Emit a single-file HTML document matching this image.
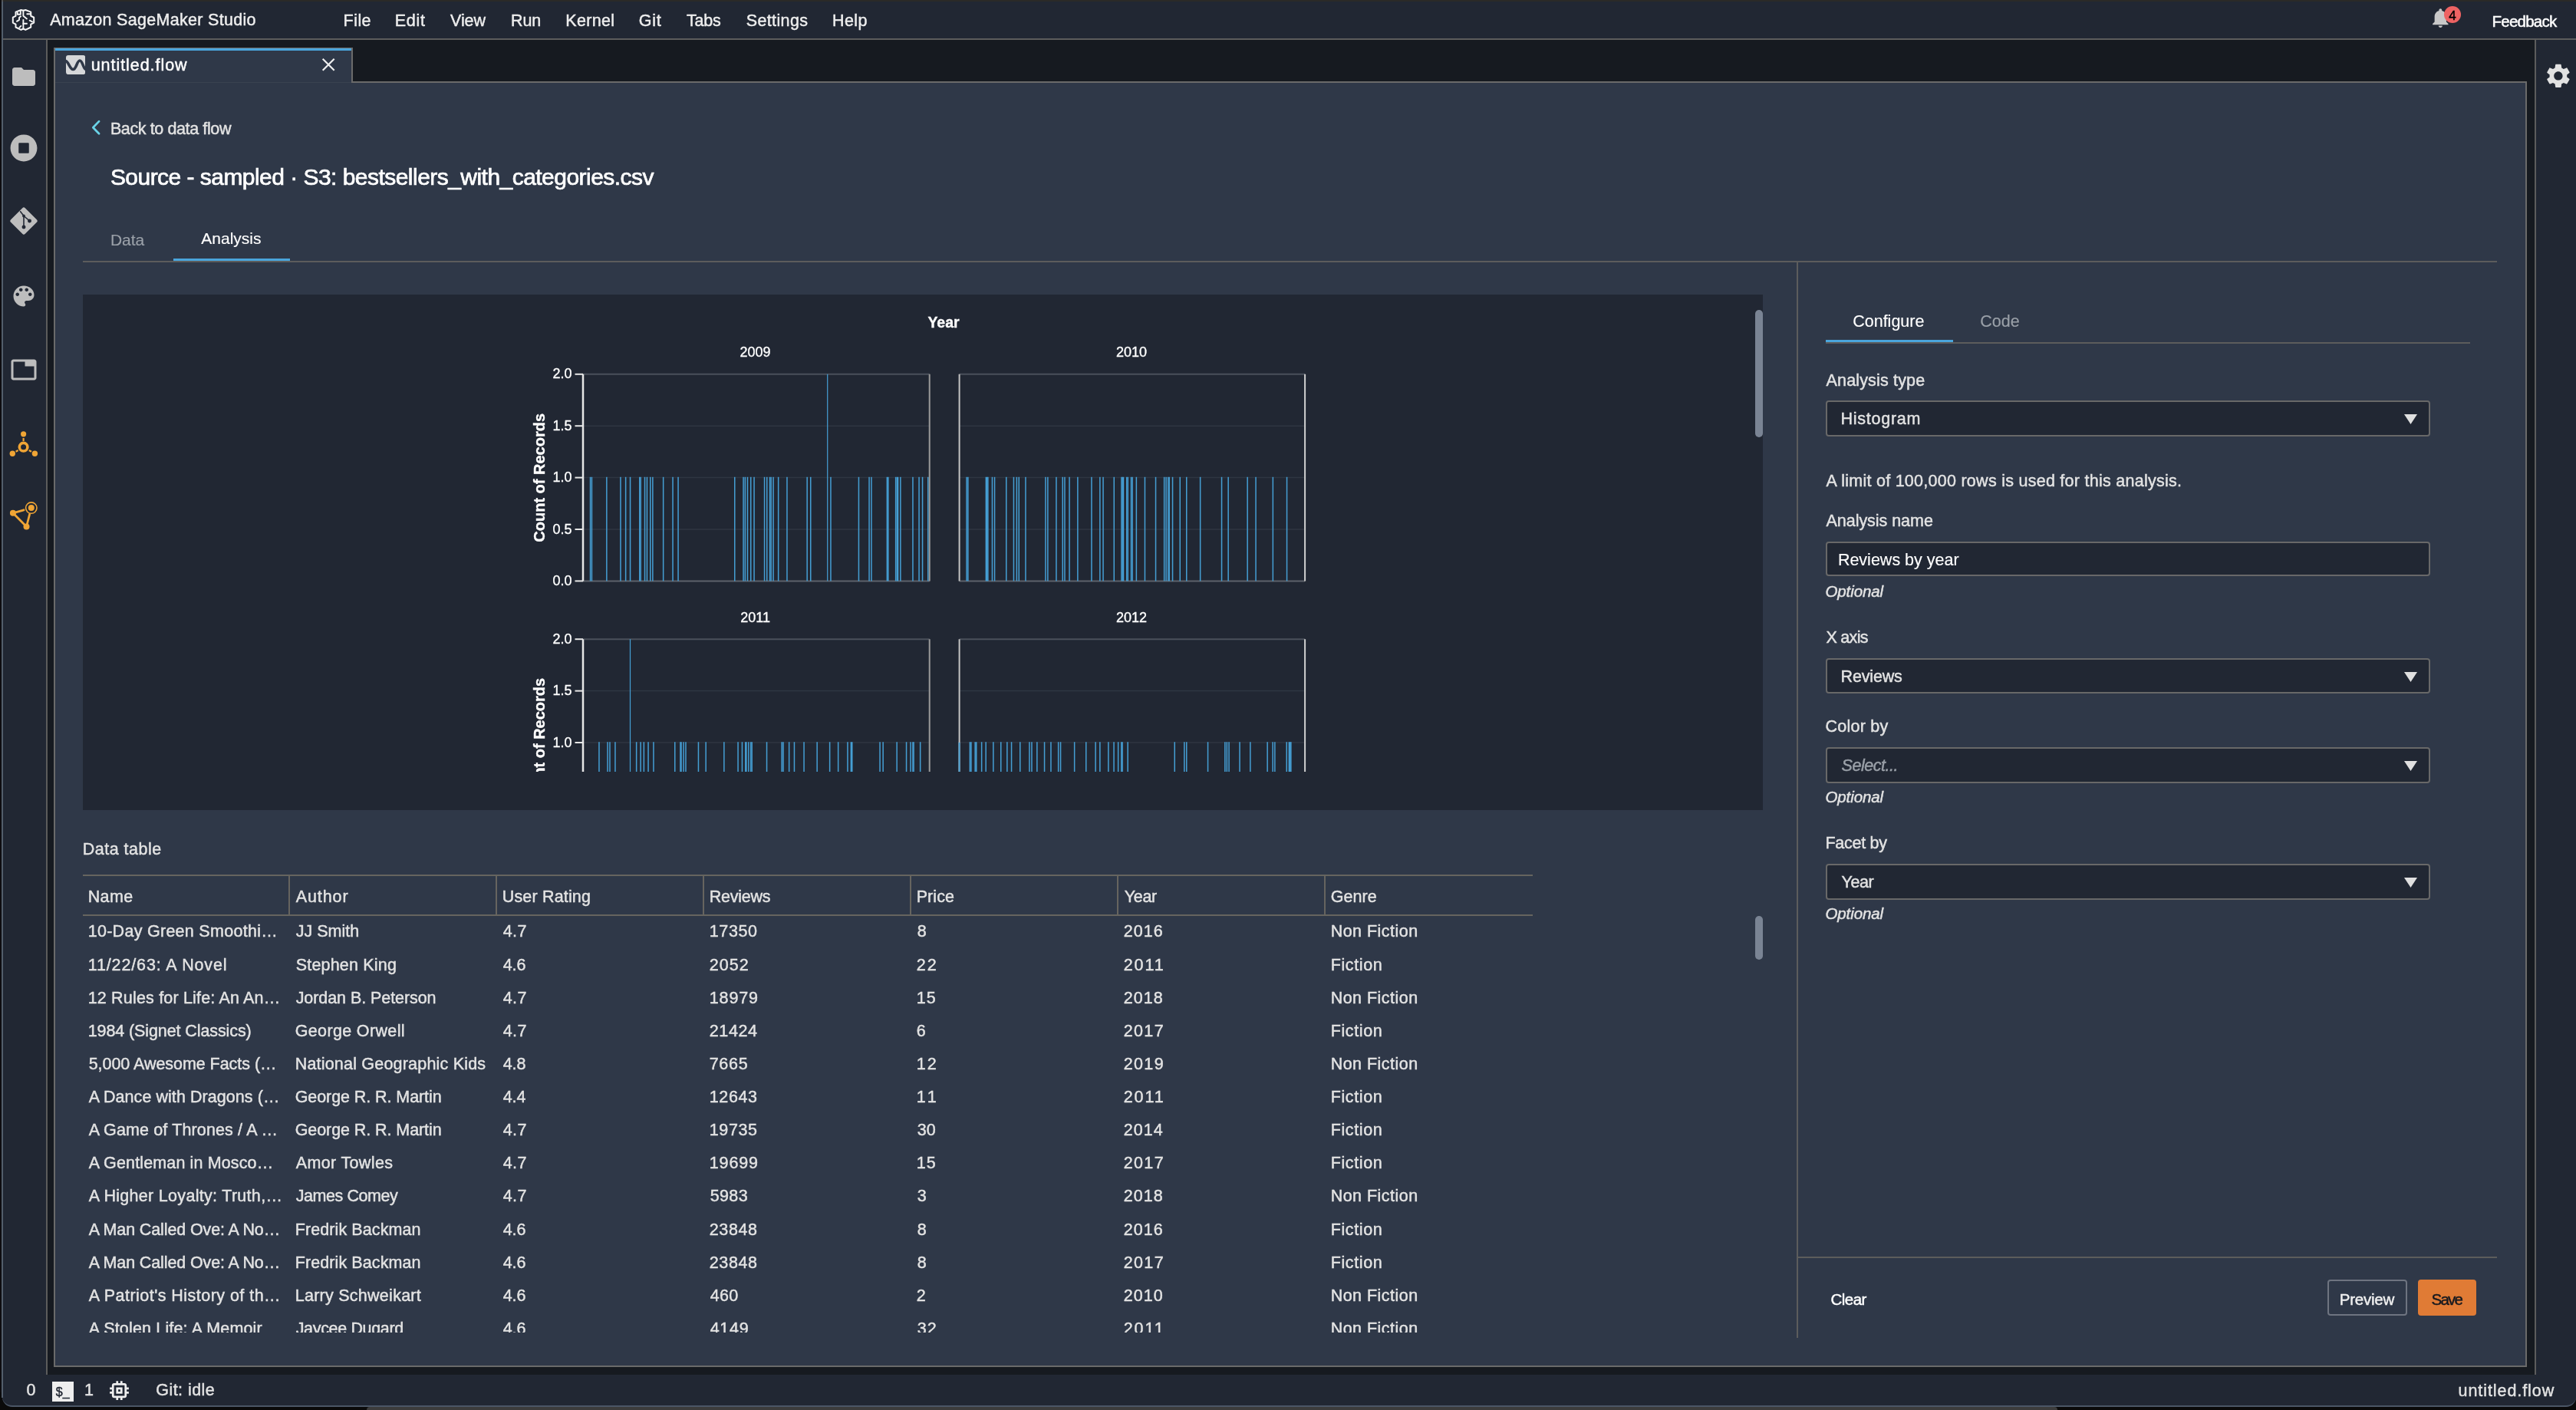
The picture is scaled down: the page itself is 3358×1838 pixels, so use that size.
<!DOCTYPE html>
<html lang="en"><head><meta charset="utf-8"><title>Amazon SageMaker Studio</title>
<style>
html,body{margin:0;padding:0;}
body{width:3358px;height:1838px;overflow:hidden;background:#161a20;position:relative;font-family:"Liberation Sans", sans-serif;}
.a{position:absolute;box-sizing:border-box;}
.t{position:absolute;white-space:pre;line-height:1;font-family:"Liberation Sans", sans-serif;-webkit-text-stroke:0.45px;}
svg{position:absolute;overflow:hidden;font-family:"Liberation Sans",sans-serif;}
#root{position:absolute;left:0;top:0;width:3358px;height:1838px;will-change:transform;}
</style></head><body><div id="root">
<div class="a" style="left:0px;top:0px;width:3358px;height:2px;background:#2a2a28;"></div>
<div class="a" style="left:0px;top:0px;width:2px;height:1838px;background:#0e0d10;"></div>
<div class="a" style="left:2px;top:0px;width:2px;height:2px;background:#555555;"></div>
<div class="a" style="left:3px;top:2px;width:3355px;height:49px;background:#212733;"></div>
<div class="a" style="left:3px;top:50px;width:3355px;height:2px;background:#5c5c5c;"></div>
<div class="a" style="left:3px;top:52px;width:57px;height:1740px;background:#212733;"></div>
<div class="a" style="left:60px;top:52px;width:2px;height:1740px;background:#5c5c5c;"></div>
<div class="a" style="left:3306px;top:52px;width:52px;height:1740px;background:#212733;"></div>
<div class="a" style="left:3304px;top:52px;width:2px;height:1740px;background:#5c5c5c;"></div>
<div class="a" style="left:0px;top:1815px;width:3358px;height:23px;background:#0a0a0a;"></div>
<div class="a" style="left:3px;top:1792px;width:3355px;height:42px;background:#212733;border-bottom-left-radius:13px;border-bottom-right-radius:13px;border-bottom:2px solid #4b5666;"></div>
<div class="a" style="left:0px;top:1834px;width:3358px;height:4px;background:#0a0a0a;"></div>
<div class="a" style="left:478px;top:1834px;width:2204px;height:4px;background:#3c3c3c;border-top-left-radius:6px;border-top-right-radius:6px;"></div>
<div class="a" style="left:70px;top:106px;width:3224px;height:1676px;background:#2f3848;border:2px solid #6a6a6a;"></div>
<div class="a" style="left:70px;top:62px;width:390px;height:46px;background:#2f3848;border-left:2px solid #6a6a6a;border-right:2px solid #6a6a6a;border-top:1px solid #6a6a6a;"></div>
<div class="a" style="left:72px;top:63px;width:386px;height:3px;background:#4aa5dc;"></div>
<div class="a" style="left:72px;top:107px;width:386px;height:1px;background:#3a4250;"></div>
<div class="t" style="font-size:21.5px;color:#eeeeee;letter-spacing:0.297px;left:65.2px;top:16.3px;">Amazon SageMaker Studio</div>
<div class="t" style="font-size:21.5px;color:#eeeeee;letter-spacing:0.438px;left:447.6px;top:16.8px;">File</div>
<div class="t" style="font-size:21.5px;color:#eeeeee;letter-spacing:0.709px;left:514.7px;top:16.8px;">Edit</div>
<div class="t" style="font-size:21.5px;color:#eeeeee;letter-spacing:-0.062px;left:587.0px;top:16.8px;">View</div>
<div class="t" style="font-size:21.5px;color:#eeeeee;letter-spacing:-0.092px;left:666px;top:16.8px;">Run</div>
<div class="t" style="font-size:21.5px;color:#eeeeee;letter-spacing:0.326px;left:737.3px;top:16.8px;">Kernel</div>
<div class="t" style="font-size:21.5px;color:#eeeeee;letter-spacing:0.75px;left:832.8px;top:16.8px;">Git</div>
<div class="t" style="font-size:21.5px;color:#eeeeee;letter-spacing:-0.155px;left:894.9px;top:16.8px;">Tabs</div>
<div class="t" style="font-size:21.5px;color:#eeeeee;letter-spacing:0.381px;left:972.7px;top:16.8px;">Settings</div>
<div class="t" style="font-size:21.5px;color:#eeeeee;letter-spacing:0.48px;left:1084.9px;top:16.8px;">Help</div>
<div class="t" style="font-size:20.5px;color:#ffffff;letter-spacing:-0.768px;left:3248.5px;top:17.65px;">Feedback</div>
<div class="t" style="font-size:21.5px;color:#ffffff;letter-spacing:0.949px;left:118.7px;top:74.8px;">untitled.flow</div>
<div class="t" style="font-size:21.5px;color:#e3e3e3;letter-spacing:-0.388px;left:143.9px;top:157.5px;">Back to data flow</div>
<div class="t" style="font-size:30px;color:#ffffff;letter-spacing:-0.536px;left:143.9px;top:215.6px;-webkit-text-stroke:0.7px;">Source - sampled · S3: bestsellers_with_categories.csv</div>
<div class="t" style="font-size:21px;color:#9aa0a8;left:143.9px;top:301.72px;-webkit-text-stroke:0.15px;">Data</div>
<div class="t" style="font-size:21px;color:#ffffff;left:262.3px;top:300.42px;-webkit-text-stroke:0.15px;">Analysis</div>
<div class="a" style="left:108px;top:340px;width:3147px;height:2px;background:#5c5c5c;"></div>
<div class="a" style="left:226px;top:337px;width:152px;height:3px;background:#4aa5dc;"></div>
<div class="a" style="left:2342px;top:341px;width:2px;height:1403px;background:#5c5c5c;"></div>
<div class="t" style="font-size:21.5px;color:#ffffff;left:2415.2px;top:409.0px;-webkit-text-stroke:0.15px;">Configure</div>
<div class="t" style="font-size:21.5px;color:#9aa0a8;left:2581.2px;top:409.0px;-webkit-text-stroke:0.15px;">Code</div>
<div class="a" style="left:2380px;top:446px;width:840px;height:2px;background:#5c5c5c;"></div>
<div class="a" style="left:2380px;top:443px;width:166px;height:3px;background:#4aa5dc;"></div>
<div class="t" style="font-size:21.5px;color:#e3e3e3;letter-spacing:0.166px;left:2380.5px;top:485.8px;">Analysis type</div>
<div class="a" style="left:2380px;top:522px;width:788px;height:47px;background:#212733;border:2px solid #686868;border-radius:4px;"></div>
<div class="t" style="font-size:21.5px;color:#e3e3e3;letter-spacing:0.73px;left:2399.6px;top:536.1px;">Histogram</div>
<svg style="left:3134px;top:540px" width="17" height="13" viewBox="0 0 17 13"><path d="M0 0H17L8.5 13Z" fill="#e0e0e0"/></svg>
<div class="t" style="font-size:21.5px;color:#e3e3e3;letter-spacing:0.265px;left:2380.5px;top:616.5px;">A limit of 100,000 rows is used for this analysis.</div>
<div class="t" style="font-size:21.5px;color:#e3e3e3;letter-spacing:-0.038px;left:2380.5px;top:668.6px;">Analysis name</div>
<div class="a" style="left:2380px;top:706px;width:788px;height:45px;background:#212733;border:2px solid #686868;border-radius:4px;"></div>
<div class="t" style="font-size:21.5px;color:#ffffff;left:2395.9px;top:720.4px;-webkit-text-stroke:0.15px;">Reviews by year</div>
<div class="t" style="font-size:20.5px;color:#e3e3e3;letter-spacing:-0.114px;font-style:italic;left:2379.5px;top:761.05px;">Optional</div>
<div class="t" style="font-size:21.5px;color:#e3e3e3;letter-spacing:-0.72px;left:2380.5px;top:820.6px;">X axis</div>
<div class="a" style="left:2380px;top:858px;width:788px;height:46px;background:#212733;border:2px solid #686868;border-radius:4px;"></div>
<div class="t" style="font-size:21.5px;color:#e3e3e3;letter-spacing:-0.166px;left:2399.6px;top:872.1px;">Reviews</div>
<svg style="left:3134px;top:876px" width="17" height="13" viewBox="0 0 17 13"><path d="M0 0H17L8.5 13Z" fill="#e0e0e0"/></svg>
<div class="t" style="font-size:21.5px;color:#e3e3e3;letter-spacing:0.227px;left:2379.5px;top:936.7px;">Color by</div>
<div class="a" style="left:2380px;top:974px;width:788px;height:47px;background:#212733;border:2px solid #686868;border-radius:4px;"></div>
<div class="t" style="font-size:21.5px;color:#9aa0a8;letter-spacing:-0.475px;font-style:italic;left:2400.6px;top:988.1px;">Select...</div>
<svg style="left:3134px;top:992px" width="17" height="13" viewBox="0 0 17 13"><path d="M0 0H17L8.5 13Z" fill="#e0e0e0"/></svg>
<div class="t" style="font-size:20.5px;color:#e3e3e3;letter-spacing:-0.114px;font-style:italic;left:2379.5px;top:1029.15px;">Optional</div>
<div class="t" style="font-size:21.5px;color:#e3e3e3;letter-spacing:-0.286px;left:2379.5px;top:1088.7px;">Facet by</div>
<div class="a" style="left:2380px;top:1126px;width:788px;height:47px;background:#212733;border:2px solid #686868;border-radius:4px;"></div>
<div class="t" style="font-size:21.5px;color:#e3e3e3;letter-spacing:-0.46px;left:2400.6px;top:1140.1px;">Year</div>
<svg style="left:3134px;top:1144px" width="17" height="13" viewBox="0 0 17 13"><path d="M0 0H17L8.5 13Z" fill="#e0e0e0"/></svg>
<div class="t" style="font-size:20.5px;color:#e3e3e3;letter-spacing:-0.114px;font-style:italic;left:2379.5px;top:1181.15px;">Optional</div>
<div class="a" style="left:2343px;top:1638px;width:912px;height:2px;background:#5c5c5c;"></div>
<div class="t" style="font-size:20.5px;color:#ffffff;letter-spacing:-0.54px;left:2386.5px;top:1683.65px;">Clear</div>
<div class="a" style="left:3034px;top:1668px;width:104px;height:47px;border:2px solid #6e7480;border-radius:4px;"></div>
<div class="t" style="font-size:20.5px;color:#f0f0f0;letter-spacing:-0.251px;left:3049.8px;top:1683.65px;">Preview</div>
<div class="a" style="left:3152px;top:1668px;width:76px;height:47px;background:#e07b35;border-radius:4px;"></div>
<div class="t" style="font-size:20.5px;color:#16191f;letter-spacing:-1.775px;left:3169.5px;top:1683.65px;">Save</div>
<div class="t" style="font-size:21.5px;color:#e3e3e3;left:34.5px;top:1802.4px;">0</div>
<div class="t" style="font-size:21.5px;color:#e3e3e3;left:110px;top:1802.4px;">1</div>
<div class="t" style="font-size:21.5px;color:#e3e3e3;letter-spacing:0.446px;left:203.3px;top:1802.4px;">Git: idle</div>
<div class="t" style="font-size:21.5px;color:#e3e3e3;letter-spacing:0.924px;left:3204.6px;top:1802.7px;">untitled.flow</div>
<div class="a" style="left:108px;top:384px;width:2190px;height:672px;background:#212733;"></div>
<div class="a" style="left:2288px;top:404px;width:10px;height:166px;background:#7a8494;border-radius:5px;"></div>
<svg style="left:108px;top:384px" width="2190" height="622" viewBox="108 384 2190 622" stroke-width="0.35">
<line x1="760" x2="1211.7" y1="555.2" y2="555.2" stroke="#2f3642" stroke-width="1.5"/>
<line x1="760" x2="1211.7" y1="622.6" y2="622.6" stroke="#2f3642" stroke-width="1.5"/>
<line x1="760" x2="1211.7" y1="690.0" y2="690.0" stroke="#2f3642" stroke-width="1.5"/>
<line x1="760" x2="1211.7" y1="487.8" y2="487.8" stroke="#4a505b" stroke-width="2"/>
<line x1="760" x2="1211.7" y1="757.4000000000001" y2="757.4000000000001" stroke="#5d626b" stroke-width="2"/>
<line x1="1250.6" x2="1701.1" y1="555.2" y2="555.2" stroke="#2f3642" stroke-width="1.5"/>
<line x1="1250.6" x2="1701.1" y1="622.6" y2="622.6" stroke="#2f3642" stroke-width="1.5"/>
<line x1="1250.6" x2="1701.1" y1="690.0" y2="690.0" stroke="#2f3642" stroke-width="1.5"/>
<line x1="1250.6" x2="1701.1" y1="487.8" y2="487.8" stroke="#4a505b" stroke-width="2"/>
<line x1="1250.6" x2="1701.1" y1="757.4000000000001" y2="757.4000000000001" stroke="#5d626b" stroke-width="2"/>
<line x1="760" x2="1211.7" y1="900.6" y2="900.6" stroke="#2f3642" stroke-width="1.5"/>
<line x1="760" x2="1211.7" y1="968.0" y2="968.0" stroke="#2f3642" stroke-width="1.5"/>
<line x1="760" x2="1211.7" y1="1035.4" y2="1035.4" stroke="#2f3642" stroke-width="1.5"/>
<line x1="760" x2="1211.7" y1="833.2" y2="833.2" stroke="#4a505b" stroke-width="2"/>
<line x1="760" x2="1211.7" y1="1102.8000000000002" y2="1102.8000000000002" stroke="#5d626b" stroke-width="2"/>
<line x1="1250.6" x2="1701.1" y1="900.6" y2="900.6" stroke="#2f3642" stroke-width="1.5"/>
<line x1="1250.6" x2="1701.1" y1="968.0" y2="968.0" stroke="#2f3642" stroke-width="1.5"/>
<line x1="1250.6" x2="1701.1" y1="1035.4" y2="1035.4" stroke="#2f3642" stroke-width="1.5"/>
<line x1="1250.6" x2="1701.1" y1="833.2" y2="833.2" stroke="#4a505b" stroke-width="2"/>
<line x1="1250.6" x2="1701.1" y1="1102.8000000000002" y2="1102.8000000000002" stroke="#5d626b" stroke-width="2"/>
<g fill="#459fd4">
<rect x="768.8" y="621.8" width="1.5" height="135.6"/>
<rect x="770.7" y="621.8" width="1.5" height="135.6"/>
<rect x="790.1" y="621.8" width="1.5" height="135.6"/>
<rect x="808.2" y="621.8" width="1.5" height="135.6"/>
<rect x="814.9" y="621.8" width="1.5" height="135.6"/>
<rect x="820.8" y="621.8" width="1.5" height="135.6"/>
<rect x="833.0" y="621.8" width="1.5" height="135.6"/>
<rect x="834.4" y="621.8" width="1.5" height="135.6"/>
<rect x="839.8" y="621.8" width="1.5" height="135.6"/>
<rect x="842.7" y="621.8" width="1.5" height="135.6"/>
<rect x="847.0" y="621.8" width="1.5" height="135.6"/>
<rect x="850.1" y="621.8" width="1.5" height="135.6"/>
<rect x="863.9" y="621.8" width="1.5" height="135.6"/>
<rect x="876.3" y="621.8" width="1.5" height="135.6"/>
<rect x="883.3" y="621.8" width="1.5" height="135.6"/>
<rect x="957.0" y="621.8" width="1.5" height="135.6"/>
<rect x="968.3" y="621.8" width="1.5" height="135.6"/>
<rect x="970.6" y="621.8" width="1.5" height="135.6"/>
<rect x="973.7" y="621.8" width="1.5" height="135.6"/>
<rect x="978.0" y="621.8" width="1.5" height="135.6"/>
<rect x="982.3" y="621.8" width="1.5" height="135.6"/>
<rect x="995.8" y="621.8" width="1.5" height="135.6"/>
<rect x="999.0" y="621.8" width="1.5" height="135.6"/>
<rect x="1002.8" y="621.8" width="1.5" height="135.6"/>
<rect x="1004.4" y="621.8" width="1.5" height="135.6"/>
<rect x="1007.3" y="621.8" width="1.5" height="135.6"/>
<rect x="1013.9" y="621.8" width="1.5" height="135.6"/>
<rect x="1025.2" y="621.8" width="1.5" height="135.6"/>
<rect x="1051.4" y="621.8" width="1.5" height="135.6"/>
<rect x="1056.0" y="621.8" width="1.5" height="135.6"/>
<rect x="1082.2" y="621.8" width="1.5" height="135.6"/>
<rect x="1118.7" y="621.8" width="1.5" height="135.6"/>
<rect x="1132.3" y="621.8" width="1.5" height="135.6"/>
<rect x="1135.2" y="621.8" width="1.5" height="135.6"/>
<rect x="1155.6" y="621.8" width="1.5" height="135.6"/>
<rect x="1157.1" y="621.8" width="1.5" height="135.6"/>
<rect x="1166.9" y="621.8" width="1.5" height="135.6"/>
<rect x="1168.6" y="621.8" width="1.5" height="135.6"/>
<rect x="1169.8" y="621.8" width="1.5" height="135.6"/>
<rect x="1173.1" y="621.8" width="1.5" height="135.6"/>
<rect x="1189.2" y="621.8" width="1.5" height="135.6"/>
<rect x="1197.3" y="621.8" width="1.5" height="135.6"/>
<rect x="1201.8" y="621.8" width="1.5" height="135.6"/>
<rect x="1209.0" y="621.8" width="1.5" height="135.6"/>
<rect x="1078.1" y="487.8" width="1.2" height="269.6"/>
<rect x="1259.3" y="621.8" width="1.5" height="135.6"/>
<rect x="1261.1" y="621.8" width="1.5" height="135.6"/>
<rect x="1284.6" y="621.8" width="1.5" height="135.6"/>
<rect x="1285.9" y="621.8" width="1.5" height="135.6"/>
<rect x="1287.1" y="621.8" width="1.5" height="135.6"/>
<rect x="1292.7" y="621.8" width="1.5" height="135.6"/>
<rect x="1295.8" y="621.8" width="1.5" height="135.6"/>
<rect x="1311.0" y="621.8" width="1.5" height="135.6"/>
<rect x="1320.7" y="621.8" width="1.5" height="135.6"/>
<rect x="1324.6" y="621.8" width="1.5" height="135.6"/>
<rect x="1327.5" y="621.8" width="1.5" height="135.6"/>
<rect x="1336.2" y="621.8" width="1.5" height="135.6"/>
<rect x="1362.2" y="621.8" width="1.5" height="135.6"/>
<rect x="1365.1" y="621.8" width="1.5" height="135.6"/>
<rect x="1376.2" y="621.8" width="1.5" height="135.6"/>
<rect x="1384.5" y="621.8" width="1.5" height="135.6"/>
<rect x="1387.2" y="621.8" width="1.5" height="135.6"/>
<rect x="1393.3" y="621.8" width="1.5" height="135.6"/>
<rect x="1404.1" y="621.8" width="1.5" height="135.6"/>
<rect x="1422.2" y="621.8" width="1.5" height="135.6"/>
<rect x="1433.1" y="621.8" width="1.5" height="135.6"/>
<rect x="1437.3" y="621.8" width="1.5" height="135.6"/>
<rect x="1451.5" y="621.8" width="1.5" height="135.6"/>
<rect x="1461.2" y="621.8" width="1.5" height="135.6"/>
<rect x="1462.6" y="621.8" width="1.5" height="135.6"/>
<rect x="1463.7" y="621.8" width="1.5" height="135.6"/>
<rect x="1468.0" y="621.8" width="1.5" height="135.6"/>
<rect x="1469.5" y="621.8" width="1.5" height="135.6"/>
<rect x="1473.8" y="621.8" width="1.5" height="135.6"/>
<rect x="1475.4" y="621.8" width="1.5" height="135.6"/>
<rect x="1480.6" y="621.8" width="1.5" height="135.6"/>
<rect x="1491.7" y="621.8" width="1.5" height="135.6"/>
<rect x="1505.8" y="621.8" width="1.5" height="135.6"/>
<rect x="1516.9" y="621.8" width="1.5" height="135.6"/>
<rect x="1519.4" y="621.8" width="1.5" height="135.6"/>
<rect x="1522.0" y="621.8" width="1.5" height="135.6"/>
<rect x="1523.5" y="621.8" width="1.5" height="135.6"/>
<rect x="1527.8" y="621.8" width="1.5" height="135.6"/>
<rect x="1537.5" y="621.8" width="1.5" height="135.6"/>
<rect x="1546.0" y="621.8" width="1.5" height="135.6"/>
<rect x="1563.9" y="621.8" width="1.5" height="135.6"/>
<rect x="1591.8" y="621.8" width="1.5" height="135.6"/>
<rect x="1600.4" y="621.8" width="1.5" height="135.6"/>
<rect x="1625.4" y="621.8" width="1.5" height="135.6"/>
<rect x="1636.3" y="621.8" width="1.5" height="135.6"/>
<rect x="1658.6" y="621.8" width="1.5" height="135.6"/>
<rect x="1676.8" y="621.8" width="1.5" height="135.6"/>
<rect x="780.2" y="967.2" width="1.5" height="135.6"/>
<rect x="791.3" y="967.2" width="1.5" height="135.6"/>
<rect x="794.2" y="967.2" width="1.5" height="135.6"/>
<rect x="801.2" y="967.2" width="1.5" height="135.6"/>
<rect x="828.9" y="967.2" width="1.5" height="135.6"/>
<rect x="834.4" y="967.2" width="1.5" height="135.6"/>
<rect x="838.6" y="967.2" width="1.5" height="135.6"/>
<rect x="844.3" y="967.2" width="1.5" height="135.6"/>
<rect x="851.2" y="967.2" width="1.5" height="135.6"/>
<rect x="879.0" y="967.2" width="1.5" height="135.6"/>
<rect x="886.2" y="967.2" width="1.5" height="135.6"/>
<rect x="887.3" y="967.2" width="1.5" height="135.6"/>
<rect x="890.3" y="967.2" width="1.5" height="135.6"/>
<rect x="893.2" y="967.2" width="1.5" height="135.6"/>
<rect x="909.7" y="967.2" width="1.5" height="135.6"/>
<rect x="919.4" y="967.2" width="1.5" height="135.6"/>
<rect x="943.1" y="967.2" width="1.5" height="135.6"/>
<rect x="961.3" y="967.2" width="1.5" height="135.6"/>
<rect x="966.7" y="967.2" width="1.5" height="135.6"/>
<rect x="971.0" y="967.2" width="1.5" height="135.6"/>
<rect x="972.2" y="967.2" width="1.5" height="135.6"/>
<rect x="975.1" y="967.2" width="1.5" height="135.6"/>
<rect x="978.0" y="967.2" width="1.5" height="135.6"/>
<rect x="979.4" y="967.2" width="1.5" height="135.6"/>
<rect x="998.8" y="967.2" width="1.5" height="135.6"/>
<rect x="1018.4" y="967.2" width="1.5" height="135.6"/>
<rect x="1020.3" y="967.2" width="1.5" height="135.6"/>
<rect x="1027.9" y="967.2" width="1.5" height="135.6"/>
<rect x="1034.7" y="967.2" width="1.5" height="135.6"/>
<rect x="1047.3" y="967.2" width="1.5" height="135.6"/>
<rect x="1064.4" y="967.2" width="1.5" height="135.6"/>
<rect x="1080.9" y="967.2" width="1.5" height="135.6"/>
<rect x="1091.9" y="967.2" width="1.5" height="135.6"/>
<rect x="1104.2" y="967.2" width="1.5" height="135.6"/>
<rect x="1108.6" y="967.2" width="1.5" height="135.6"/>
<rect x="1110.0" y="967.2" width="1.5" height="135.6"/>
<rect x="1146.3" y="967.2" width="1.5" height="135.6"/>
<rect x="1150.4" y="967.2" width="1.5" height="135.6"/>
<rect x="1168.4" y="967.2" width="1.5" height="135.6"/>
<rect x="1180.8" y="967.2" width="1.5" height="135.6"/>
<rect x="1186.3" y="967.2" width="1.5" height="135.6"/>
<rect x="1189.2" y="967.2" width="1.5" height="135.6"/>
<rect x="1190.3" y="967.2" width="1.5" height="135.6"/>
<rect x="1198.9" y="967.2" width="1.5" height="135.6"/>
<rect x="820.9" y="833.2" width="1.2" height="269.6"/>
<rect x="1249.6" y="967.2" width="1.5" height="135.6"/>
<rect x="1263.6" y="967.2" width="1.5" height="135.6"/>
<rect x="1265.2" y="967.2" width="1.5" height="135.6"/>
<rect x="1270.4" y="967.2" width="1.5" height="135.6"/>
<rect x="1272.0" y="967.2" width="1.5" height="135.6"/>
<rect x="1278.9" y="967.2" width="1.5" height="135.6"/>
<rect x="1284.4" y="967.2" width="1.5" height="135.6"/>
<rect x="1294.1" y="967.2" width="1.5" height="135.6"/>
<rect x="1304.0" y="967.2" width="1.5" height="135.6"/>
<rect x="1312.1" y="967.2" width="1.5" height="135.6"/>
<rect x="1317.8" y="967.2" width="1.5" height="135.6"/>
<rect x="1329.0" y="967.2" width="1.5" height="135.6"/>
<rect x="1341.2" y="967.2" width="1.5" height="135.6"/>
<rect x="1344.2" y="967.2" width="1.5" height="135.6"/>
<rect x="1351.1" y="967.2" width="1.5" height="135.6"/>
<rect x="1360.8" y="967.2" width="1.5" height="135.6"/>
<rect x="1369.2" y="967.2" width="1.5" height="135.6"/>
<rect x="1378.9" y="967.2" width="1.5" height="135.6"/>
<rect x="1381.8" y="967.2" width="1.5" height="135.6"/>
<rect x="1399.9" y="967.2" width="1.5" height="135.6"/>
<rect x="1415.0" y="967.2" width="1.5" height="135.6"/>
<rect x="1427.4" y="967.2" width="1.5" height="135.6"/>
<rect x="1433.1" y="967.2" width="1.5" height="135.6"/>
<rect x="1444.1" y="967.2" width="1.5" height="135.6"/>
<rect x="1451.3" y="967.2" width="1.5" height="135.6"/>
<rect x="1456.9" y="967.2" width="1.5" height="135.6"/>
<rect x="1461.0" y="967.2" width="1.5" height="135.6"/>
<rect x="1462.4" y="967.2" width="1.5" height="135.6"/>
<rect x="1469.4" y="967.2" width="1.5" height="135.6"/>
<rect x="1530.5" y="967.2" width="1.5" height="135.6"/>
<rect x="1543.1" y="967.2" width="1.5" height="135.6"/>
<rect x="1546.0" y="967.2" width="1.5" height="135.6"/>
<rect x="1573.8" y="967.2" width="1.5" height="135.6"/>
<rect x="1596.1" y="967.2" width="1.5" height="135.6"/>
<rect x="1598.6" y="967.2" width="1.5" height="135.6"/>
<rect x="1601.3" y="967.2" width="1.5" height="135.6"/>
<rect x="1615.3" y="967.2" width="1.5" height="135.6"/>
<rect x="1629.1" y="967.2" width="1.5" height="135.6"/>
<rect x="1651.4" y="967.2" width="1.5" height="135.6"/>
<rect x="1658.4" y="967.2" width="1.5" height="135.6"/>
<rect x="1661.1" y="967.2" width="1.5" height="135.6"/>
<rect x="1676.5" y="967.2" width="1.5" height="135.6"/>
<rect x="1679.6" y="967.2" width="1.5" height="135.6"/>
<rect x="1680.9" y="967.2" width="1.5" height="135.6"/>
<rect x="1682.1" y="967.2" width="1.5" height="135.6"/>
</g>
<line x1="760" x2="760" y1="487.8" y2="757.4000000000001" stroke="#e6e6e6" stroke-width="2.5"/>
<line x1="1211.7" x2="1211.7" y1="487.8" y2="757.4000000000001" stroke="#9a9a9a" stroke-width="2"/>
<line x1="1250.6" x2="1250.6" y1="487.8" y2="757.4000000000001" stroke="#c4c4c4" stroke-width="2"/>
<line x1="1701.1" x2="1701.1" y1="487.8" y2="757.4000000000001" stroke="#d0d0d0" stroke-width="2"/>
<line x1="749.5" x2="760" y1="487.8" y2="487.8" stroke="#e6e6e6" stroke-width="2"/>
<line x1="749.5" x2="760" y1="555.2" y2="555.2" stroke="#e6e6e6" stroke-width="2"/>
<line x1="749.5" x2="760" y1="622.6" y2="622.6" stroke="#e6e6e6" stroke-width="2"/>
<line x1="749.5" x2="760" y1="690.0" y2="690.0" stroke="#e6e6e6" stroke-width="2"/>
<line x1="749.5" x2="760" y1="757.4000000000001" y2="757.4000000000001" stroke="#e6e6e6" stroke-width="2"/>
<text x="745.5" y="493.3" text-anchor="end" font-size="18" fill="#ffffff" stroke="#ffffff">2.0</text>
<text x="745.5" y="560.7" text-anchor="end" font-size="18" fill="#ffffff" stroke="#ffffff">1.5</text>
<text x="745.5" y="628.1" text-anchor="end" font-size="18" fill="#ffffff" stroke="#ffffff">1.0</text>
<text x="745.5" y="695.5" text-anchor="end" font-size="18" fill="#ffffff" stroke="#ffffff">0.5</text>
<text x="745.5" y="762.9" text-anchor="end" font-size="18" fill="#ffffff" stroke="#ffffff">0.0</text>
<text transform="translate(709.5,622.8) rotate(-90)" text-anchor="middle" font-size="20" font-weight="bold" fill="#ffffff" stroke="#ffffff">Count of Records</text>
<line x1="760" x2="760" y1="833.2" y2="1102.8000000000002" stroke="#e6e6e6" stroke-width="2.5"/>
<line x1="1211.7" x2="1211.7" y1="833.2" y2="1102.8000000000002" stroke="#9a9a9a" stroke-width="2"/>
<line x1="1250.6" x2="1250.6" y1="833.2" y2="1102.8000000000002" stroke="#c4c4c4" stroke-width="2"/>
<line x1="1701.1" x2="1701.1" y1="833.2" y2="1102.8000000000002" stroke="#d0d0d0" stroke-width="2"/>
<line x1="749.5" x2="760" y1="833.2" y2="833.2" stroke="#e6e6e6" stroke-width="2"/>
<line x1="749.5" x2="760" y1="900.6" y2="900.6" stroke="#e6e6e6" stroke-width="2"/>
<line x1="749.5" x2="760" y1="968.0" y2="968.0" stroke="#e6e6e6" stroke-width="2"/>
<line x1="749.5" x2="760" y1="1035.4" y2="1035.4" stroke="#e6e6e6" stroke-width="2"/>
<line x1="749.5" x2="760" y1="1102.8000000000002" y2="1102.8000000000002" stroke="#e6e6e6" stroke-width="2"/>
<text x="745.5" y="838.7" text-anchor="end" font-size="18" fill="#ffffff" stroke="#ffffff">2.0</text>
<text x="745.5" y="906.1" text-anchor="end" font-size="18" fill="#ffffff" stroke="#ffffff">1.5</text>
<text x="745.5" y="973.5" text-anchor="end" font-size="18" fill="#ffffff" stroke="#ffffff">1.0</text>
<text x="745.5" y="1040.9" text-anchor="end" font-size="18" fill="#ffffff" stroke="#ffffff">0.5</text>
<text x="745.5" y="1108.3" text-anchor="end" font-size="18" fill="#ffffff" stroke="#ffffff">0.0</text>
<text transform="translate(709.5,967.7) rotate(-90)" text-anchor="middle" font-size="20" font-weight="bold" fill="#ffffff" stroke="#ffffff">Count of Records</text>
<rect x="1249.8" y="968" width="1.6" height="40" fill="#459fd4"/>
<text x="1230" y="427" text-anchor="middle" font-size="19.5" font-weight="bold" fill="#ffffff" stroke="#ffffff">Year</text>
<text x="984.6" y="465.4" text-anchor="middle" font-size="18" fill="#ffffff" stroke="#ffffff">2009</text>
<text x="1475" y="465.4" text-anchor="middle" font-size="18" fill="#ffffff" stroke="#ffffff">2010</text>
<text x="984.6" y="811.2" text-anchor="middle" font-size="18" fill="#ffffff" stroke="#ffffff">2011</text>
<text x="1475" y="811.2" text-anchor="middle" font-size="18" fill="#ffffff" stroke="#ffffff">2012</text>
</svg>
<div class="t" style="font-size:21.5px;color:#e3e3e3;letter-spacing:0.483px;left:107.8px;top:1096.5px;">Data table</div>
<div class="a" style="left:108px;top:1140px;width:1890px;height:2px;background:#66645f;"></div>
<div class="a" style="left:108px;top:1192px;width:1890px;height:2px;background:#66645f;"></div>
<div class="a" style="left:376px;top:1142px;width:2px;height:50px;background:#66645f;"></div>
<div class="a" style="left:646px;top:1142px;width:2px;height:50px;background:#66645f;"></div>
<div class="a" style="left:916px;top:1142px;width:2px;height:50px;background:#66645f;"></div>
<div class="a" style="left:1186px;top:1142px;width:2px;height:50px;background:#66645f;"></div>
<div class="a" style="left:1456px;top:1142px;width:2px;height:50px;background:#66645f;"></div>
<div class="a" style="left:1726px;top:1142px;width:2px;height:50px;background:#66645f;"></div>
<div class="t" style="font-size:21.5px;color:#e3e3e3;letter-spacing:0.369px;left:114.7px;top:1158.8px;">Name</div>
<div class="t" style="font-size:21.5px;color:#e3e3e3;letter-spacing:0.923px;left:385.7px;top:1158.8px;">Author</div>
<div class="t" style="font-size:21.5px;color:#e3e3e3;letter-spacing:0.174px;left:654.7px;top:1158.8px;">User Rating</div>
<div class="t" style="font-size:21.5px;color:#e3e3e3;letter-spacing:-0.249px;left:924.7px;top:1158.8px;">Reviews</div>
<div class="t" style="font-size:21.5px;color:#e3e3e3;letter-spacing:0.093px;left:1194.7px;top:1158.8px;">Price</div>
<div class="t" style="font-size:21.5px;color:#e3e3e3;letter-spacing:-0.294px;left:1465.7px;top:1158.8px;">Year</div>
<div class="t" style="font-size:21.5px;color:#e3e3e3;letter-spacing:0.051px;left:1734.7px;top:1158.8px;">Genre</div>
<div class="a" style="left:108px;top:1194px;width:1890px;height:543px;overflow:hidden;">
<div class="t" style="font-size:21.5px;color:#e3e3e3;letter-spacing:0.281px;left:6.7px;top:10.4px;">10-Day Green Smoothi…</div>
<div class="t" style="font-size:21.5px;color:#e3e3e3;letter-spacing:0.018px;left:277.7px;top:10.4px;">JJ Smith</div>
<div class="t" style="font-size:21.5px;color:#e3e3e3;letter-spacing:0.435px;left:547.7px;top:10.4px;">4.7</div>
<div class="t" style="font-size:21.5px;color:#e3e3e3;letter-spacing:0.643px;left:816.7px;top:10.4px;">17350</div>
<div class="t" style="font-size:21.5px;color:#e3e3e3;left:1087.7px;top:10.4px;">8</div>
<div class="t" style="font-size:21.5px;color:#e3e3e3;letter-spacing:1.043px;left:1356.7px;top:10.4px;">2016</div>
<div class="t" style="font-size:21.5px;color:#e3e3e3;letter-spacing:0.472px;left:1626.7px;top:10.4px;">Non Fiction</div>
<div class="t" style="font-size:21.5px;color:#e3e3e3;letter-spacing:0.872px;left:6.7px;top:53.53px;">11/22/63: A Novel</div>
<div class="t" style="font-size:21.5px;color:#e3e3e3;letter-spacing:0.187px;left:277.7px;top:53.53px;">Stephen King</div>
<div class="t" style="font-size:21.5px;color:#e3e3e3;letter-spacing:-0.065px;left:547.7px;top:53.53px;">4.6</div>
<div class="t" style="font-size:21.5px;color:#e3e3e3;letter-spacing:1.023px;left:816.7px;top:53.53px;">2052</div>
<div class="t" style="font-size:21.5px;color:#e3e3e3;letter-spacing:2.063px;left:1086.7px;top:53.53px;">22</div>
<div class="t" style="font-size:21.5px;color:#e3e3e3;letter-spacing:1.908px;left:1356.7px;top:53.53px;">2011</div>
<div class="t" style="font-size:21.5px;color:#e3e3e3;letter-spacing:0.622px;left:1626.7px;top:53.53px;">Fiction</div>
<div class="t" style="font-size:21.5px;color:#e3e3e3;letter-spacing:0.18px;left:6.7px;top:96.66px;">12 Rules for Life: An An…</div>
<div class="t" style="font-size:21.5px;color:#e3e3e3;letter-spacing:-0.07px;left:277.7px;top:96.66px;">Jordan B. Peterson</div>
<div class="t" style="font-size:21.5px;color:#e3e3e3;letter-spacing:0.435px;left:547.7px;top:96.66px;">4.7</div>
<div class="t" style="font-size:21.5px;color:#e3e3e3;letter-spacing:0.893px;left:816.7px;top:96.66px;">18979</div>
<div class="t" style="font-size:21.5px;color:#e3e3e3;letter-spacing:1.063px;left:1086.7px;top:96.66px;">15</div>
<div class="t" style="font-size:21.5px;color:#e3e3e3;letter-spacing:1.043px;left:1356.7px;top:96.66px;">2018</div>
<div class="t" style="font-size:21.5px;color:#e3e3e3;letter-spacing:0.472px;left:1626.7px;top:96.66px;">Non Fiction</div>
<div class="t" style="font-size:21.5px;color:#e3e3e3;letter-spacing:-0.097px;left:6.7px;top:139.79px;">1984 (Signet Classics)</div>
<div class="t" style="font-size:21.5px;color:#e3e3e3;letter-spacing:0.356px;left:276.7px;top:139.79px;">George Orwell</div>
<div class="t" style="font-size:21.5px;color:#e3e3e3;letter-spacing:0.435px;left:547.7px;top:139.79px;">4.7</div>
<div class="t" style="font-size:21.5px;color:#e3e3e3;letter-spacing:0.643px;left:816.7px;top:139.79px;">21424</div>
<div class="t" style="font-size:21.5px;color:#e3e3e3;left:1086.7px;top:139.79px;">6</div>
<div class="t" style="font-size:21.5px;color:#e3e3e3;letter-spacing:1.376px;left:1356.7px;top:139.79px;">2017</div>
<div class="t" style="font-size:21.5px;color:#e3e3e3;letter-spacing:0.622px;left:1626.7px;top:139.79px;">Fiction</div>
<div class="t" style="font-size:21.5px;color:#e3e3e3;letter-spacing:-0.046px;left:7.7px;top:182.92px;">5,000 Awesome Facts (…</div>
<div class="t" style="font-size:21.5px;color:#e3e3e3;letter-spacing:0.198px;left:276.7px;top:182.92px;">National Geographic Kids</div>
<div class="t" style="font-size:21.5px;color:#e3e3e3;letter-spacing:-0.065px;left:547.7px;top:182.92px;">4.8</div>
<div class="t" style="font-size:21.5px;color:#e3e3e3;letter-spacing:0.689px;left:816.7px;top:182.92px;">7665</div>
<div class="t" style="font-size:21.5px;color:#e3e3e3;letter-spacing:2.063px;left:1086.7px;top:182.92px;">12</div>
<div class="t" style="font-size:21.5px;color:#e3e3e3;letter-spacing:1.376px;left:1356.7px;top:182.92px;">2019</div>
<div class="t" style="font-size:21.5px;color:#e3e3e3;letter-spacing:0.472px;left:1626.7px;top:182.92px;">Non Fiction</div>
<div class="t" style="font-size:21.5px;color:#e3e3e3;letter-spacing:0.062px;left:7.7px;top:226.05px;">A Dance with Dragons (…</div>
<div class="t" style="font-size:21.5px;color:#e3e3e3;letter-spacing:-0.078px;left:276.7px;top:226.05px;">George R. R. Martin</div>
<div class="t" style="font-size:21.5px;color:#e3e3e3;letter-spacing:-0.065px;left:547.7px;top:226.05px;">4.4</div>
<div class="t" style="font-size:21.5px;color:#e3e3e3;letter-spacing:0.643px;left:816.7px;top:226.05px;">12643</div>
<div class="t" style="font-size:21.5px;color:#e3e3e3;letter-spacing:3.658px;left:1086.7px;top:226.05px;">11</div>
<div class="t" style="font-size:21.5px;color:#e3e3e3;letter-spacing:1.908px;left:1356.7px;top:226.05px;">2011</div>
<div class="t" style="font-size:21.5px;color:#e3e3e3;letter-spacing:0.622px;left:1626.7px;top:226.05px;">Fiction</div>
<div class="t" style="font-size:21.5px;color:#e3e3e3;letter-spacing:0.134px;left:7.7px;top:269.18px;">A Game of Thrones / A …</div>
<div class="t" style="font-size:21.5px;color:#e3e3e3;letter-spacing:-0.078px;left:276.7px;top:269.18px;">George R. R. Martin</div>
<div class="t" style="font-size:21.5px;color:#e3e3e3;letter-spacing:0.435px;left:547.7px;top:269.18px;">4.7</div>
<div class="t" style="font-size:21.5px;color:#e3e3e3;letter-spacing:0.643px;left:816.7px;top:269.18px;">19735</div>
<div class="t" style="font-size:21.5px;color:#e3e3e3;letter-spacing:0.063px;left:1087.7px;top:269.18px;">30</div>
<div class="t" style="font-size:21.5px;color:#e3e3e3;letter-spacing:1.043px;left:1356.7px;top:269.18px;">2014</div>
<div class="t" style="font-size:21.5px;color:#e3e3e3;letter-spacing:0.622px;left:1626.7px;top:269.18px;">Fiction</div>
<div class="t" style="font-size:21.5px;color:#e3e3e3;letter-spacing:0.136px;left:7.7px;top:312.31px;">A Gentleman in Mosco…</div>
<div class="t" style="font-size:21.5px;color:#e3e3e3;letter-spacing:0.359px;left:277.7px;top:312.31px;">Amor Towles</div>
<div class="t" style="font-size:21.5px;color:#e3e3e3;letter-spacing:0.435px;left:547.7px;top:312.31px;">4.7</div>
<div class="t" style="font-size:21.5px;color:#e3e3e3;letter-spacing:0.893px;left:816.7px;top:312.31px;">19699</div>
<div class="t" style="font-size:21.5px;color:#e3e3e3;letter-spacing:1.063px;left:1086.7px;top:312.31px;">15</div>
<div class="t" style="font-size:21.5px;color:#e3e3e3;letter-spacing:1.376px;left:1356.7px;top:312.31px;">2017</div>
<div class="t" style="font-size:21.5px;color:#e3e3e3;letter-spacing:0.622px;left:1626.7px;top:312.31px;">Fiction</div>
<div class="t" style="font-size:21.5px;color:#e3e3e3;letter-spacing:0.302px;left:7.7px;top:355.44px;">A Higher Loyalty: Truth,…</div>
<div class="t" style="font-size:21.5px;color:#e3e3e3;letter-spacing:-0.435px;left:277.7px;top:355.44px;">James Comey</div>
<div class="t" style="font-size:21.5px;color:#e3e3e3;letter-spacing:0.435px;left:547.7px;top:355.44px;">4.7</div>
<div class="t" style="font-size:21.5px;color:#e3e3e3;letter-spacing:0.356px;left:817.7px;top:355.44px;">5983</div>
<div class="t" style="font-size:21.5px;color:#e3e3e3;left:1087.7px;top:355.44px;">3</div>
<div class="t" style="font-size:21.5px;color:#e3e3e3;letter-spacing:1.043px;left:1356.7px;top:355.44px;">2018</div>
<div class="t" style="font-size:21.5px;color:#e3e3e3;letter-spacing:0.472px;left:1626.7px;top:355.44px;">Non Fiction</div>
<div class="t" style="font-size:21.5px;color:#e3e3e3;letter-spacing:-0.123px;left:7.7px;top:398.57px;">A Man Called Ove: A No…</div>
<div class="t" style="font-size:21.5px;color:#e3e3e3;letter-spacing:0.098px;left:276.7px;top:398.57px;">Fredrik Backman</div>
<div class="t" style="font-size:21.5px;color:#e3e3e3;letter-spacing:-0.065px;left:547.7px;top:398.57px;">4.6</div>
<div class="t" style="font-size:21.5px;color:#e3e3e3;letter-spacing:0.643px;left:816.7px;top:398.57px;">23848</div>
<div class="t" style="font-size:21.5px;color:#e3e3e3;left:1087.7px;top:398.57px;">8</div>
<div class="t" style="font-size:21.5px;color:#e3e3e3;letter-spacing:1.043px;left:1356.7px;top:398.57px;">2016</div>
<div class="t" style="font-size:21.5px;color:#e3e3e3;letter-spacing:0.622px;left:1626.7px;top:398.57px;">Fiction</div>
<div class="t" style="font-size:21.5px;color:#e3e3e3;letter-spacing:-0.123px;left:7.7px;top:441.7px;">A Man Called Ove: A No…</div>
<div class="t" style="font-size:21.5px;color:#e3e3e3;letter-spacing:0.098px;left:276.7px;top:441.7px;">Fredrik Backman</div>
<div class="t" style="font-size:21.5px;color:#e3e3e3;letter-spacing:-0.065px;left:547.7px;top:441.7px;">4.6</div>
<div class="t" style="font-size:21.5px;color:#e3e3e3;letter-spacing:0.643px;left:816.7px;top:441.7px;">23848</div>
<div class="t" style="font-size:21.5px;color:#e3e3e3;left:1087.7px;top:441.7px;">8</div>
<div class="t" style="font-size:21.5px;color:#e3e3e3;letter-spacing:1.376px;left:1356.7px;top:441.7px;">2017</div>
<div class="t" style="font-size:21.5px;color:#e3e3e3;letter-spacing:0.622px;left:1626.7px;top:441.7px;">Fiction</div>
<div class="t" style="font-size:21.5px;color:#e3e3e3;letter-spacing:0.465px;left:7.7px;top:484.83px;">A Patriot&#x27;s History of th…</div>
<div class="t" style="font-size:21.5px;color:#e3e3e3;letter-spacing:0.265px;left:276.7px;top:484.83px;">Larry Schweikart</div>
<div class="t" style="font-size:21.5px;color:#e3e3e3;letter-spacing:-0.065px;left:547.7px;top:484.83px;">4.6</div>
<div class="t" style="font-size:21.5px;color:#e3e3e3;letter-spacing:0.283px;left:817.7px;top:484.83px;">460</div>
<div class="t" style="font-size:21.5px;color:#e3e3e3;left:1086.7px;top:484.83px;">2</div>
<div class="t" style="font-size:21.5px;color:#e3e3e3;letter-spacing:1.043px;left:1356.7px;top:484.83px;">2010</div>
<div class="t" style="font-size:21.5px;color:#e3e3e3;letter-spacing:0.472px;left:1626.7px;top:484.83px;">Non Fiction</div>
<div class="t" style="font-size:21.5px;color:#e3e3e3;letter-spacing:0.169px;left:7.7px;top:527.96px;">A Stolen Life: A Memoir</div>
<div class="t" style="font-size:21.5px;color:#e3e3e3;letter-spacing:-0.338px;left:277.7px;top:527.96px;">Jaycee Dugard</div>
<div class="t" style="font-size:21.5px;color:#e3e3e3;letter-spacing:-0.065px;left:547.7px;top:527.96px;">4.6</div>
<div class="t" style="font-size:21.5px;color:#e3e3e3;letter-spacing:0.689px;left:817.7px;top:527.96px;">4149</div>
<div class="t" style="font-size:21.5px;color:#e3e3e3;letter-spacing:1.063px;left:1087.7px;top:527.96px;">32</div>
<div class="t" style="font-size:21.5px;color:#e3e3e3;letter-spacing:1.908px;left:1356.7px;top:527.96px;">2011</div>
<div class="t" style="font-size:21.5px;color:#e3e3e3;letter-spacing:0.472px;left:1626.7px;top:527.96px;">Non Fiction</div>
</div>
<div class="a" style="left:2288px;top:1194px;width:10px;height:57px;background:#7a8494;border-radius:5px;"></div>
<div class="a" style="left:2px;top:2px;width:2px;height:1820px;background:#525d6b;"></div>
<svg style="left:0px;top:0px" width="60" height="50" viewBox="0 0 60 50"><polygon points="30.37,13.66 33.27,12.95 40.22,15.65 40.22,20.76 44.19,22.74 44.19,29.55 40.22,31.68 40.22,35.51 33.27,38.92 30.37,37.50 27.45,38.92 20.50,35.51 20.50,31.68 16.81,29.55 16.81,22.74 20.50,20.76 20.50,15.65 27.45,12.95" fill="none" stroke="#f6f6f6" stroke-width="2" stroke-linejoin="round"/><polyline points="30.37,13.66 30.37,20.76 34.97,24.44" fill="none" stroke="#f6f6f6" stroke-width="1.9" stroke-linejoin="round" stroke-linecap="round"/><polyline points="22.77,16.50 22.77,18.77 26.74,18.77 26.74,14.51" fill="none" stroke="#f6f6f6" stroke-width="1.9" stroke-linejoin="round" stroke-linecap="round"/><polyline points="27.03,21.32 25.04,23.03 25.04,25.86 21.92,27.85" fill="none" stroke="#f6f6f6" stroke-width="1.9" stroke-linejoin="round" stroke-linecap="round"/><polyline points="35.26,18.20 40.22,18.20" fill="none" stroke="#f6f6f6" stroke-width="1.9" stroke-linejoin="round" stroke-linecap="round"/><polyline points="38.66,26.72 42.07,28.42" fill="none" stroke="#f6f6f6" stroke-width="1.9" stroke-linejoin="round" stroke-linecap="round"/><polyline points="30.37,25.86 30.37,37.50" fill="none" stroke="#f6f6f6" stroke-width="1.9" stroke-linejoin="round" stroke-linecap="round"/><polyline points="30.37,30.69 34.97,30.69" fill="none" stroke="#f6f6f6" stroke-width="1.9" stroke-linejoin="round" stroke-linecap="round"/><polyline points="27.31,33.81 25.32,35.80" fill="none" stroke="#f6f6f6" stroke-width="1.9" stroke-linejoin="round" stroke-linecap="round"/></svg>
<svg style="left:12.6px;top:81.6px" width="36" height="36" viewBox="0 0 24 24" ><path fill="#bdbdbd" d="M10 4H4c-1.1 0-1.99.9-1.99 2L2 18c0 1.1.9 2 2 2h16c1.1 0 2-.9 2-2V8c0-1.1-.9-2-2-2h-8l-2-2z"/></svg>
<svg style="left:12.6px;top:174.5px" width="36" height="36" viewBox="0 0 512 512" ><path fill="#bdbdbd" d="M256 8C119 8 8 119 8 256s111 248 248 248 248-111 248-248S393 8 256 8zm96 328c0 8.800-7.200 16-16 16H176c-8.800 0-16-7.200-16-16V176c0-8.800 7.200-16 16-16h160c8.800 0 16 7.200 16 16v160z"/></svg>
<svg style="left:12.6px;top:270.3px" width="36" height="36" viewBox="0 0 24 24" ><rect x="3.2" y="3.2" width="17.6" height="17.6" rx="1.7" transform="rotate(45 12 12)" fill="#bdbdbd"/><g stroke="#212733" stroke-width="1.05" fill="none"><path d="M12 7.660V17.500"/><path d="M8.800 3.440L12 7.660L17.100 12"/></g><g fill="#212733"><circle cx="12" cy="7.660" r="1.25"/><circle cx="12" cy="17.300" r="1.65"/><circle cx="17" cy="12" r="1.65"/></g></svg>
<svg style="left:12.6px;top:367.5px" width="36" height="36" viewBox="0 0 24 24" ><path fill="#bdbdbd" d="M12 3c-4.970 0-9 4.030-9 9s4.030 9 9 9c.830 0 1.500-.670 1.500-1.500 0-.390-.150-.740-.390-1.010-.230-.260-.380-.610-.380-.990 0-.830.670-1.500 1.500-1.500H16c2.760 0 5-2.240 5-5 0-4.420-4.030-8-9-8zm-5.500 9c-.830 0-1.500-.670-1.500-1.500S5.670 9 6.500 9 8 9.670 8 10.500 7.330 12 6.500 12zm3-4C8.670 8 8 7.330 8 6.500S8.670 5 9.500 5s1.500.670 1.500 1.500S10.330 8 9.500 8zm5 0c-.830 0-1.500-.670-1.500-1.500S13.670 5 14.500 5s1.500.670 1.500 1.500S15.330 8 14.500 8zm3 4c-.830 0-1.500-.670-1.500-1.500S16.670 9 17.500 9s1.500.670 1.500 1.500-.670 1.500-1.500 1.500z"/></svg>
<svg style="left:12.6px;top:463.6px" width="36" height="36" viewBox="0 0 24 24" ><path fill="#bdbdbd" d="M21 3H3c-1.100 0-2 .900-2 2v14c0 1.100.900 2 2 2h18c1.100 0 2-.900 2-2V5c0-1.100-.900-2-2-2zm0 16H3V5h10v4h8v10z"/></svg>
<svg style="left:0px;top:550px" width="60" height="150" viewBox="0 550 60 150"><g fill="#f0a535"><circle cx="30.6" cy="565.8" r="3.6"/><circle cx="16.3" cy="591.3" r="3.7"/><circle cx="45.4" cy="591.3" r="3.7"/></g><circle cx="30.6" cy="582.7" r="5.3" fill="none" stroke="#f0a535" stroke-width="3.6"/><g stroke="#f0a535" stroke-width="2.2"><path d="M30.6 571V575"/><path d="M20.6 588.8L23.6 587"/><path d="M41 588.8L37.8 587"/></g><g fill="#f0a535"><circle cx="16.9" cy="668.8" r="4"/><circle cx="40.8" cy="662.1" r="4"/><circle cx="34.5" cy="686.5" r="4"/></g><circle cx="40.8" cy="662.1" r="7.2" fill="none" stroke="#f0a535" stroke-width="1.6"/><g stroke="#f0a535" stroke-width="2.8" stroke-linecap="round"><path d="M16.9 668.8L31 664.8"/><path d="M16.9 668.8L34.5 686.5"/><path d="M34.5 686.5L38.6 670.5"/></g></svg>
<svg style="left:85.7px;top:71.9px" width="25.3" height="25.1" viewBox="0 0 25.3 25.1"><rect width="25.3" height="25.1" rx="3" fill="#d6d7d9"/><path d="M-0.5 7.5C3 7.5 5 18.5 9.3 18.5C13.6 18.500 14.200 7 18 7C21.800 7 22.500 18 26 18.500" fill="none" stroke="#2f3848" stroke-width="3.6"/></svg>
<svg style="left:418px;top:74px" width="21" height="21" viewBox="418 74 21 21"><path d="M420.700 76.800L435.700 91.800M435.700 76.800L420.700 91.800" stroke="#efefef" stroke-width="2.2" fill="none"/></svg>
<svg style="left:118px;top:154px" width="16" height="24" viewBox="118 154 16 24"><path d="M129.100 158.100L121.300 166.200L129.100 174.300" stroke="#6ad4e8" stroke-width="2.7" fill="none" stroke-linecap="round" stroke-linejoin="round"/></svg>
<svg style="left:3166.4px;top:7.5px" width="30.6" height="30.6" viewBox="0 0 24 24" ><path fill="#c8c8c8" d="M12 22c1.100 0 2-.900 2-2h-4c0 1.100.890 2 2 2zm6-6v-5c0-3.070-1.640-5.640-4.500-6.320V4c0-.830-.670-1.500-1.500-1.500s-1.500.670-1.500 1.500v.680C7.630 5.360 6 7.920 6 11v5l-2 2v1h16v-1l-2-2z"/></svg>
<div class="a" style="left:3186px;top:8.1px;width:22px;height:22px;background:#ee6363;border-radius:50%;"></div>
<div class="t" style="font-size:17px;color:#000000;left:3192.27px;top:12.41px;">4</div>
<svg style="left:3315.7px;top:80.19999999999999px" width="37.8" height="37.8" viewBox="0 0 24 24" ><path fill="#e2e2e2" d="M19.140 12.940c.040-.300.060-.610.060-.940 0-.320-.020-.640-.070-.940l2.030-1.580c.180-.140.230-.410.120-.610l-1.920-3.320c-.120-.220-.370-.290-.590-.220l-2.390.960c-.500-.380-1.030-.700-1.620-.940l-.360-2.540c-.040-.240-.240-.410-.480-.410h-3.840c-.240 0-.430.170-.470.410l-.360 2.540c-.590.240-1.130.570-1.620.940l-2.390-.960c-.220-.080-.470 0-.590.220L2.740 8.870c-.120.210-.080.470.120.610l2.030 1.580c-.050.300-.090.630-.090.940s.020.640.070.940l-2.030 1.580c-.180.140-.230.410-.120.610l1.920 3.320c.120.220.370.290.590.220l2.390-.960c.500.380 1.030.700 1.620.940l.360 2.540c.050.240.240.410.480.410h3.840c.240 0 .440-.170.470-.410l.360-2.540c.590-.240 1.130-.560 1.620-.940l2.390.960c.220.080.470 0 .590-.220l1.920-3.320c.120-.220.070-.470-.120-.610l-2.010-1.580zM12 15.600c-1.980 0-3.600-1.620-3.600-3.600s1.620-3.600 3.600-3.600 3.600 1.620 3.600 3.600-1.620 3.600-3.600 3.600z"/></svg>
<div class="a" style="left:68.3px;top:1800.8px;width:27.4px;height:26.2px;background:#eeeeee;"></div>
<div class="t" style="font-size:16px;color:#212733;left:72.8px;top:1807.46px;">$_</div>
<svg style="left:139.4px;top:1795.5px" width="33" height="33" viewBox="0 0 24 24" ><path fill="#eeeeee" d="M15 9H9v6h6V9zm-2 4h-2v-2h2v2zm8-2V9h-2V7c0-1.100-.900-2-2-2h-2V3h-2v2h-2V3H9v2H7c-1.100 0-2 .900-2 2v2H3v2h2v2H3v2h2v2c0 1.100.900 2 2 2h2v2h2v-2h2v2h2v-2h2c1.100 0 2-.900 2-2v-2h2v-2h-2v-2h2zm-4 6H7V7h10v10z"/></svg>
</div></body></html>
